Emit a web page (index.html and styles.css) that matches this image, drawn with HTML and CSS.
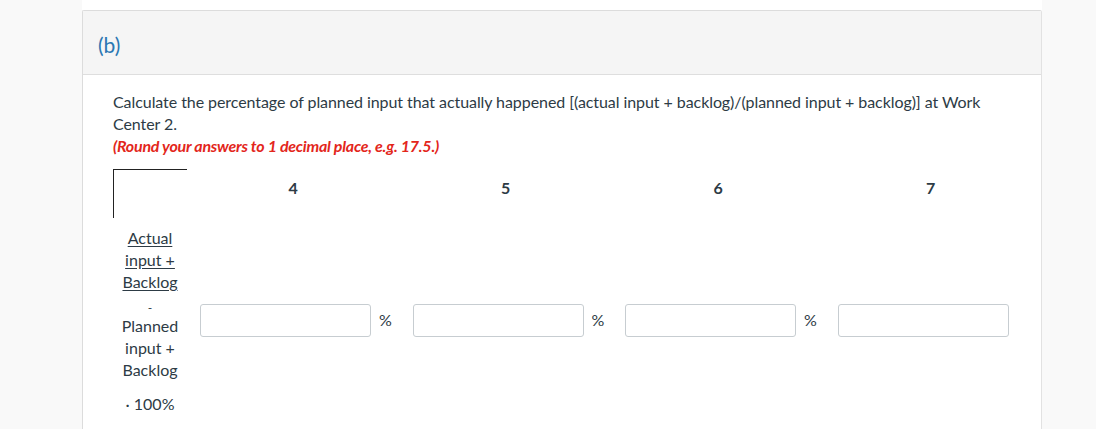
FILE: index.html
```html
<!DOCTYPE html>
<html>
<head>
<meta charset="utf-8">
<link rel="stylesheet" href="styles.css">
</head>
<body>
<div class="main">
  <div class="card">
    <div class="card-head">(b)</div>
    <div class="card-body">
      <p class="prompt">Calculate the percentage of planned input that actually happened [(actual input + backlog)/(planned input + backlog)] at Work Center 2.</p>
      <p class="note">(Round your answers to 1 decimal place, e.g. 17.5.)</p>
      <div class="grid">
        <div class="corner"></div>
        <div class="colhead">4</div>
        <div class="colhead">5</div>
        <div class="colhead">6</div>
        <div class="colhead">7</div>
        <div class="label">
          <div class="num">Actual<br>input +<br>Backlog</div>
          <div class="bar">-</div>
          <div class="den">Planned<br>input +<br>Backlog</div>
          <div class="times">· 100%</div>
        </div>
        <div class="cell"><input class="field" type="text"><span class="unit">%</span></div>
        <div class="cell"><input class="field" type="text"><span class="unit">%</span></div>
        <div class="cell"><input class="field" type="text"><span class="unit">%</span></div>
        <div class="cell"><input class="field" type="text"></div>
      </div>
    </div>
  </div>
</div>
</body>
</html>
```

FILE: styles.css
```css
html, body {
  margin: 0;
  padding: 0;
}
body {
  background: #f9f9f9;
  font-family: Lato, "Open Sans", sans-serif;
  color: #2d3b45;
  height: 429px;
  overflow: hidden;
}
.main {
  width: 960px;
  margin-left: 82px;
  background: #fff;
  padding-top: 10px;
  height: 419px;
}
.card {
  border: 1px solid #dcdcdc;
  border-right-color: #e2e2e2;
  border-radius: 2px 2px 0 0;
  height: 430px;
}
.card-head {
  height: 64px;
  box-sizing: border-box;
  background: #f5f5f5;
  border-bottom: 1px solid #dedede;
  padding: 23px 0 0 15px;
  font-size: 21px;
  line-height: 22px;
  color: #2b78b3;
}
.card-body {
  padding: 16px 30px 0 30px;
}
.prompt {
  margin: 0;
  font-size: 16px;
  line-height: 22px;
  letter-spacing: -0.07px;
  width: 898px;
}
.note {
  margin: 0;
  font-size: 16px;
  line-height: 22px;
  font-weight: 700;
  font-style: italic;
  color: #e3261b;
  letter-spacing: -0.25px;
}
.grid {
  margin-top: 12px;
  display: grid;
  grid-template-columns: 74px repeat(4, 212.5px);
  grid-template-rows: 49px auto;
}
.corner {
  border-left: 1px solid #222;
  border-top: 1px solid #222;
}
.colhead {
  text-align: center;
  font-weight: 700;
  font-size: 16px;
  line-height: 20px;
  padding-top: 9px;
}
.label {
  text-align: center;
  font-size: 16px;
  line-height: 22px;
  padding-top: 9px;
}
.num {
  text-decoration: underline;
  text-underline-offset: 2px;
}
.bar {
  height: 22px;
  font-size: 12px;
  line-height: 12px;
  padding-top: 9px;
  box-sizing: border-box;
}
.times {
  margin-top: 12px;
}
.cell {
  display: flex;
  align-items: center;
  padding-left: 13px;
  gap: 8px;
  padding-top: 7px;
}
.field {
  width: 171px;
  height: 33px;
  box-sizing: border-box;
  margin: 0;
  border: 1px solid #c7cdd1;
  border-radius: 3px;
  background: #fff;
  font-family: inherit;
}
.unit {
  font-size: 16px;
  line-height: 22px;
}
```
